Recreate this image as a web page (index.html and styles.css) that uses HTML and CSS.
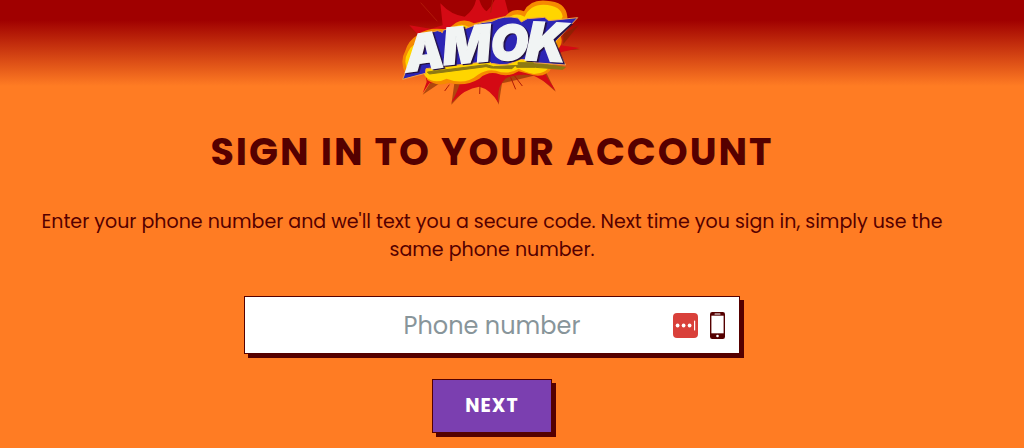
FILE: index.html
```html
<!DOCTYPE html>
<html lang="en">
<head>
    <meta charset="UTF-8">
    <meta name="viewport" content="width=device-width, initial-scale=1.0">
    <title>AMOK - Sign in</title>
    <link rel="stylesheet" href="styles.css">
</head>
<body>
    <header>
        <svg class="logo" viewBox="6 0 600 330" role="img" aria-label="AMOK">
            <!-- burst -->
            <path class="burst-shadow" d="M520 102 L566 76 L520 132 Z M98 284 L122 246 L146 252 Z M184 314 L240 254 L300 250 L326 314 L336 250 L440 225 L497 275 L460 200 L200 200 Z M512 152 L570 148 L515 140 Z"/>
            <path class="burst" d="M58 76 L122 86 L158 76 L151 10 Q184 46 224 50 Q252 30 258 0 L268 0 Q276 26 290 34 Q306 18 314 0 L345 0 L355 38 L480 60 L512 136 L570 144 L514 156 L460 214 L497 272 Q455 236 428 226 Q378 220 346 236 Q318 262 326 310 Q302 268 268 260 Q224 266 184 308 Q206 268 212 242 L118 250 L98 280 L110 246 L90 110 Z"/>
            <path class="crack" d="M92 8 L142 64 M308 0 L302 38 M270 256 L269 282 M164 273 L178 254 M362 232 L377 268 M374 228 L397 258"/>

            <!-- cloud -->
            <path class="cloud-edge" d="M46 220 Q28 184 46 152 Q54 122 84 104 Q118 78 174 90 Q210 46 252 70 Q300 58 346 48 Q370 22 402 34 Q420 -2 468 2 Q528 4 532 50 Q534 78 508 96 Q524 126 504 148 L486 200 Q474 232 430 226 Q404 218 386 214 Q354 234 318 220 Q290 216 268 236 Q224 262 178 248 Q144 262 112 240 L104 214 Z"/>
            <path class="cloud" d="M54 214 Q38 184 54 156 Q68 126 110 120 L178 94 Q208 62 238 82 L350 58 Q374 34 404 50 Q420 14 460 14 Q514 16 518 50 L494 98 Q508 128 490 146 L480 190 Q476 220 432 222 Q404 216 386 206 Q354 226 318 212 Q290 206 264 224 Q224 258 170 236 Q134 254 108 232 Q96 218 106 208 Z"/>

            <!-- plate behind the letters -->
            <path class="plate-shadow" d="M112 216 L290 194 L310 200 L385 196 L384 188 L436 188 L526 202 L518 208 L436 202 L380 202 L376 196 L366 206 L304 204 L288 200 L118 222 Z"/>
            <path class="plate" d="M38 238 L88 106 L142 92 Q154 94 157 98 L160 90 L212 80 L220 88 L258 74 Q276 66 306 64 Q342 44 384 54 L394 66 L412 56 L464 52 L476 62 L563 53 L492 130 L527 195 L432 188 L426 180 L384 178 Q358 202 304 190 L298 184 L108 206 L106 220 Z"/>

            <text class="wordmark"><tspan class="a" x="50" y="217" rotate="-8">A</tspan><tspan class="m" x="162" y="195" rotate="-5">M</tspan><tspan class="o" x="304" y="182" rotate="-2">O</tspan><tspan class="k" x="406" y="180" rotate="3">K</tspan></text>
        </svg>
    </header>

    <main>
        <h1>Sign in to your account</h1>
        <p>Enter your phone number and we'll text you a secure code. Next time you sign in, simply use the same phone number.</p>

        <form>
            <div class="field">
                <input type="tel" id="phone" name="phone" placeholder="Phone number" aria-label="Phone number">
                <div class="field-icons">
                    <svg class="icon-password" viewBox="0 0 25 25" aria-hidden="true">
                        <rect width="25" height="25" rx="4" fill="#d9403a"/>
                        <g fill="#fff">
                            <circle cx="4.6" cy="12.5" r="1.9"/>
                            <circle cx="10.6" cy="12.5" r="1.9"/>
                            <circle cx="16.6" cy="12.5" r="1.9"/>
                            <rect x="21" y="7.5" width="1.2" height="10" rx=".6"/>
                        </g>
                    </svg>
                    <svg class="icon-phone" viewBox="0 0 15 27" aria-hidden="true">
                        <rect width="15" height="27" rx="2.2" fill="#500"/>
                        <rect x="1.4" y="3.7" width="12.2" height="17.6" fill="#fff"/>
                        <rect x="4.5" y="1.4" width="6" height="1" rx=".5" fill="#fff"/>
                        <circle cx="7.5" cy="24" r="1.3" fill="#fff"/>
                    </svg>
                </div>
            </div>
            <button type="submit">Next</button>
        </form>
    </main>
</body>
</html>
```

FILE: styles.css
```css
* { box-sizing: border-box; }

body {
    margin: 0;
    padding: 0 40px 12px 0;
    font-family: Poppins, Inter, sans-serif;
    color: #550000;
    background: #ff7c23 linear-gradient(#a00000 20px, #ff7c23 86px) no-repeat;
    text-align: center;
}

.logo {
    display: block;
    width: 200px;
    height: 110px;
    margin: 0 auto;
}

.burst { fill: #d40a14; }
.burst-shadow { fill: #7c2500; opacity: 0.6; }
.crack { fill: none; stroke: #b01a08; stroke-width: 3; }
.cloud { fill: #ffd500; }
.cloud-edge { fill: #f68a00; }
.plate { fill: #2d25b4; stroke: #f0a44a; stroke-width: 3; }
.plate-shadow { fill: #8d7913; stroke: #8d7913; stroke-width: 3; }

.wordmark {
    font-family: Inter, sans-serif;
    font-style: italic;
    font-weight: 900;
    fill: #f1f4f4;
    stroke: #f1f4f4;
    stroke-width: 4;
    filter: drop-shadow(5px 3px 0 #23103f);
}

.a { font-size: 150px; }
.m { font-size: 152px; }
.o { font-size: 146px; }
.k { font-size: 160px; }

main { padding: 20px 32px 0; }

h1 {
    margin: 0;
    font-size: 38px;
    line-height: 44px;
    font-weight: 700;
    letter-spacing: 2px;
    text-transform: uppercase;
}

p {
    margin: 34px 0 32px;
    font-size: 19px;
    line-height: 28px;
}

form {
    display: flex;
    flex-direction: column;
    align-items: center;
    gap: 25px;
}

.field {
    position: relative;
    width: 54%;
}

input {
    display: block;
    width: 100%;
    height: 58px;
    padding: 0 16px;
    border: 1px solid #550000;
    border-radius: 0;
    background: #fff;
    box-shadow: 4px 4px 0 #550000;
    font-family: inherit;
    font-size: 24px;
    color: #550000;
    text-align: center;
}

input::placeholder { color: #88959a; opacity: 1; }

/* sits over the right end of the input */
.field-icons {
    position: absolute;
    top: 0;
    right: 15px;
    height: 100%;
    display: flex;
    align-items: center;
    gap: 12px;
    pointer-events: none;
}

.icon-password { width: 25px; height: 25px; }
.icon-phone { width: 15px; height: 27px; }

button {
    padding: 14px 32px;
    border: 1px solid #550000;
    background: #7b3fb0;
    box-shadow: 4px 4px 0 #550000;
    color: #fff;
    font-family: inherit;
    font-size: 19px;
    line-height: 24px;
    font-weight: 700;
    letter-spacing: 1px;
    text-transform: uppercase;
    cursor: pointer;
}
```
